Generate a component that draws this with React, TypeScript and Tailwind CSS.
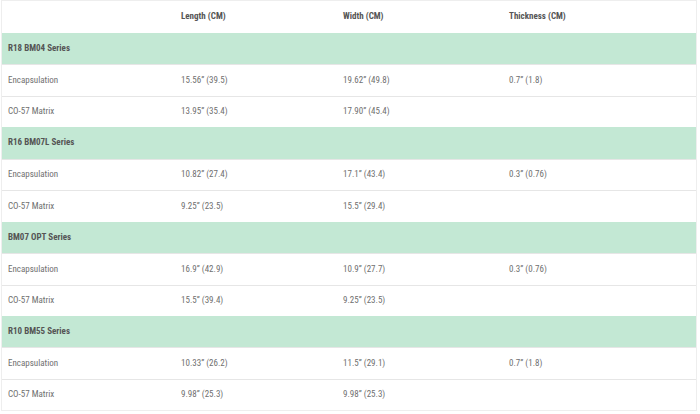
const groups = [
  {
    name: "R18 BM04 Series",
    rows: [
      { label: "Encapsulation", length: "15.56\u201d (39.5)", width: "19.62\u201d (49.8)", thickness: "0.7\u201d (1.8)" },
      { label: "CO-57 Matrix", length: "13.95\u201d (35.4)", width: "17.90\u201d (45.4)", thickness: "" },
    ],
  },
  {
    name: "R16 BM07L Series",
    rows: [
      { label: "Encapsulation", length: "10.82\u201d (27.4)", width: "17.1\u201d (43.4)", thickness: "0.3\u201d (0.76)" },
      { label: "CO-57 Matrix", length: "9.25\u201d (23.5)", width: "15.5\u201d (29.4)", thickness: "" },
    ],
  },
  {
    name: "BM07 OPT Series",
    rows: [
      { label: "Encapsulation", length: "16.9\u201d (42.9)", width: "10.9\u201d (27.7)", thickness: "0.3\u201d (0.76)" },
      { label: "CO-57 Matrix", length: "15.5\u201d (39.4)", width: "9.25\u201d (23.5)", thickness: "" },
    ],
  },
  {
    name: "R10 BM55 Series",
    rows: [
      { label: "Encapsulation", length: "10.33\u201d (26.2)", width: "11.5\u201d (29.1)", thickness: "0.7\u201d (1.8)" },
      { label: "CO-57 Matrix", length: "9.98\u201d (25.3)", width: "9.98\u201d (25.3)", thickness: "" },
    ],
  },
];

const cols = "grid grid-cols-[172px_163px_166px_1fr]";

export default function App() {
  return (
    <div className="w-[700px] h-[414px] bg-white pl-px font-['Roboto_Condensed','Roboto',sans-serif] font-stretch-condensed">
      <div className="w-[696px] border border-[#eeeeee] text-[9px] text-[#6f6f6f]">
        <div className={`${cols} h-[32px] items-center font-bold text-[#555]`}>
          <div />
          <div className="pl-[7px]">Length (CM)</div>
          <div className="pl-[6px]">Width (CM)</div>
          <div className="pl-[6px]">Thickness (CM)</div>
        </div>
        {groups.map((g) => (
          <div key={g.name}>
            <div className="h-[31.44px] flex items-center bg-[#c3e8d4] pl-[6px] font-bold text-[#555]">
              {g.name}
            </div>
            {g.rows.map((r) => (
              <div
                key={r.label}
                className={`${cols} h-[31.44px] items-center border-t border-[#e6e6e6] first:border-t-0`}
              >
                <div className="pl-[6px]">{r.label}</div>
                <div className="pl-[7px]">{r.length}</div>
                <div className="pl-[6px]">{r.width}</div>
                <div className="pl-[6px]">{r.thickness}</div>
              </div>
            ))}
          </div>
        ))}
      </div>
    </div>
  );
}
